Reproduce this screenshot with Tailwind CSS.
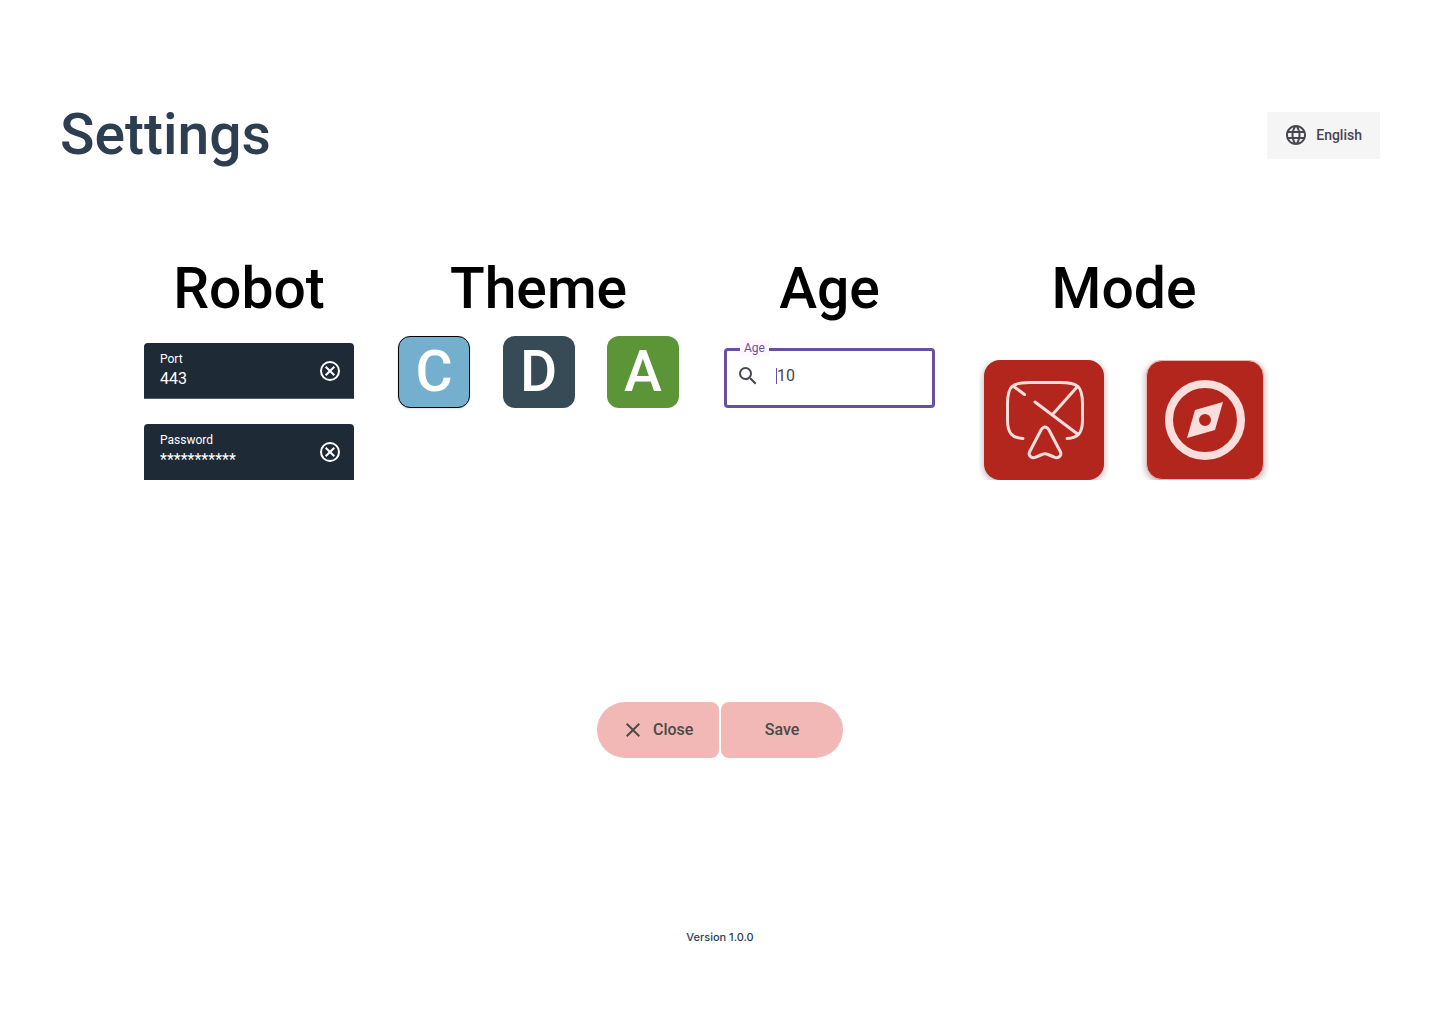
<!DOCTYPE html>
<html lang="en">
<head>
<meta charset="utf-8">
<meta name="viewport" content="width=device-width, initial-scale=1">
<title>Settings</title>
<script src="https://cdn.jsdelivr.net/npm/@tailwindcss/browser@4"></script>
</head>
<body class="min-h-screen bg-white font-[Roboto,sans-serif] text-black">
<div class="flex min-h-screen flex-col">
  <header class="flex items-center justify-between px-15 pt-[103px]">
    <h1 class="text-[57px] leading-16 font-medium text-[#2c3e50]">Settings</h1>
    <button type="button" class="flex h-[47px] items-center gap-2 bg-[#f5f5f5] pr-[18px] pl-[17px] text-sm font-medium text-[#49454f]">
      <svg class="size-6" viewBox="0 0 24 24" fill="currentColor" aria-hidden="true"><path d="M11.99 2C6.47 2 2 6.48 2 12s4.47 10 9.99 10C17.52 22 22 17.52 22 12S17.52 2 11.99 2zm6.93 6h-2.95c-.32-1.25-.78-2.45-1.38-3.56 1.84.63 3.37 1.91 4.33 3.56zM12 4.04c.83 1.2 1.48 2.53 1.91 3.96h-3.82c.43-1.43 1.08-2.76 1.91-3.96zM4.26 14C4.1 13.36 4 12.69 4 12s.1-1.36.26-2h3.38c-.08.66-.14 1.32-.14 2s.06 1.34.14 2H4.26zm.82 2h2.95c.32 1.25.78 2.45 1.38 3.56-1.84-.63-3.37-1.9-4.33-3.56zm2.95-8H5.08c.96-1.66 2.49-2.93 4.33-3.56C8.81 5.55 8.35 6.75 8.03 8zM12 19.96c-.83-1.2-1.48-2.53-1.91-3.96h3.82c-.43 1.43-1.08 2.76-1.91 3.96zM14.34 14H9.66c-.09-.66-.16-1.32-.16-2s.07-1.35.16-2h4.68c.09.65.16 1.32.16 2s-.07 1.34-.16 2zm.25 5.56c.6-1.11 1.06-2.31 1.38-3.56h2.95c-.96 1.65-2.49 2.93-4.33 3.56zM16.36 14c.08-.66.14-1.32.14-2s-.06-1.34-.14-2h3.38c.16.64.26 1.31.26 2s-.1 1.36-.26 2h-3.38z"/></svg>
      English
    </button>
  </header>

  <main class="flex flex-col">
    <div class="flex flex-wrap gap-x-11 gap-y-8 pt-[90px] pl-36">
      <section class="flex w-[210px] flex-col">
        <h2 class="text-center text-[57px] leading-16 font-medium">Robot</h2>
        <div class="mt-[22px] flex flex-col gap-[25px]">
          <div class="flex h-14 items-center rounded-t border-b border-[#49606f] bg-[#1f2a37] pr-3 pl-4 text-white">
            <div class="flex min-w-0 flex-1 flex-col">
              <label for="port" class="text-xs leading-4">Port</label>
              <input id="port" type="text" value="443" class="w-full leading-6 outline-none">
            </div>
            <button type="button" aria-label="Clear port">
              <svg class="size-6" viewBox="0 0 24 24" fill="none" stroke="currentColor" stroke-width="2" aria-hidden="true"><circle cx="12" cy="12" r="9"/><path d="M7.7 7.7l8.6 8.6M16.3 7.7l-8.6 8.6"/></svg>
            </button>
          </div>
          <div class="flex h-14 items-center rounded-t bg-[#1f2a37] pr-3 pl-4 text-white">
            <div class="flex min-w-0 flex-1 flex-col">
              <label for="password" class="text-xs leading-4">Password</label>
              <input id="password" type="text" value="***********" class="w-full leading-6 outline-none">
            </div>
            <button type="button" aria-label="Clear password">
              <svg class="size-6" viewBox="0 0 24 24" fill="none" stroke="currentColor" stroke-width="2" aria-hidden="true"><circle cx="12" cy="12" r="9"/><path d="M7.7 7.7l8.6 8.6M16.3 7.7l-8.6 8.6"/></svg>
            </button>
          </div>
        </div>
      </section>

      <section class="flex w-[281px] flex-col">
        <h2 class="text-center text-[57px] leading-16 font-medium">Theme</h2>
        <div class="mt-[15px] flex justify-between text-[57px] leading-16 font-medium text-white">
          <button type="button" class="flex size-18 items-center justify-center rounded-xl border border-black bg-[#74b0cd] shadow-sm">C</button>
          <button type="button" class="flex size-18 items-center justify-center rounded-xl bg-[#374b56]">D</button>
          <button type="button" class="flex size-18 items-center justify-center rounded-xl bg-[#5b9537]">A</button>
        </div>
      </section>

      <section class="ml-px flex w-[211px] flex-col">
        <h2 class="text-center text-[57px] leading-16 font-medium">Age</h2>
        <div class="relative mt-[27px] flex h-15 items-start rounded border-3 border-[#6750a4] pt-[13px] pl-[9px]">
          <label for="age" class="absolute -top-[11px] left-[13px] bg-[#fef7ff] px-1 text-xs leading-4 text-[#6750a4]">Age</label>
          <svg class="size-6 text-[#49454f]" viewBox="0 0 24 24" fill="currentColor" aria-hidden="true"><path d="M15.5 14h-.79l-.28-.27A6.47 6.47 0 0 0 16 9.5 6.5 6.5 0 1 0 9.5 16c1.61 0 3.09-.59 4.23-1.57l.27.28v.79l5 4.99L20.49 19l-4.99-5zm-6 0C7.01 14 5 11.99 5 9.5S7.01 5 9.5 5 14 7.01 14 9.5 11.99 14 9.5 14z"/></svg>
          <span class="mt-1 ml-4 h-4 w-px bg-[#6750a4]"></span>
          <input id="age" type="text" inputmode="numeric" value="10" class="min-w-0 flex-1 leading-6 text-[#49454f] outline-none">
        </div>
      </section>

      <section class="ml-[5px] flex w-[280px] flex-col">
        <h2 class="text-center text-[57px] leading-16 font-medium">Mode</h2>
        <div class="mt-[39px] flex justify-between text-[#f9dedc]">
          <button type="button" aria-label="Guided mode" class="size-30 rounded-2xl bg-[#b3261e] shadow-[0_2px_6px_1px_rgba(0,0,0,0.25)] [clip-path:inset(0_-5px_0_-5px)]">
            <svg class="size-full" viewBox="0 0 120 120" fill="none" stroke="currentColor" stroke-width="3" stroke-linecap="round" stroke-linejoin="round" aria-hidden="true"><path d="M39 78.500C28 78 23.500 73 23.500 60V44C23.500 26 28 22.500 46 22.500H76C94 22.500 98.500 26 98.500 44V60C98.500 73 94 78 83 78.500M29 26L40.500 34.500M51 42L93.500 74M93 27L69 54M57 70Q61 64 65 70L76.500 92C78 96 74 99 70 97L64 94.500Q61 93 58 94.500L52 97C48 99 44 96 45.500 92Z"/></svg>
          </button>
          <button type="button" aria-label="Explore mode" class="flex h-30 w-[118px] items-center justify-center rounded-2xl border border-[#f0b5b1] bg-[#b3261e] shadow-[0_2px_6px_1px_rgba(0,0,0,0.25)] [clip-path:inset(0_-5px_0_-5px)]">
            <svg class="size-20" viewBox="19 19 80 80" aria-hidden="true"><circle cx="59" cy="59" r="36" fill="none" stroke="currentColor" stroke-width="8"/><path fill="currentColor" fill-rule="evenodd" d="M77 41L69 69L41 77L49 49ZM59 53a6 6 0 1 0 0 12a6 6 0 1 0 0-12Z"/></svg>
          </button>
        </div>
      </section>
    </div>

    <div class="mt-[222px] flex justify-center gap-0.5 font-medium text-[#4a4a48]">
      <button type="button" class="flex h-14 w-[122px] items-center gap-2 rounded-l-[28px] rounded-r-lg bg-[#f2b8b5] pl-6">
        <svg class="size-6" viewBox="0 0 24 24" fill="currentColor" aria-hidden="true"><path d="M19 6.410L17.590 5 12 10.590 6.410 5 5 6.410 10.590 12 5 17.590 6.410 19 12 13.410 17.590 19 19 17.590 13.410 12z"/></svg>
        Close
      </button>
      <button type="button" class="h-14 w-[122px] rounded-l-lg rounded-r-[28px] bg-[#f2b8b5]">Save</button>
    </div>
  </main>

  <footer class="mt-auto pb-[79px] text-center font-[Inter,sans-serif] text-[11px] leading-4 font-medium text-[#2c3e50]">Version 1.0.0</footer>
</div>
</body>
</html>
